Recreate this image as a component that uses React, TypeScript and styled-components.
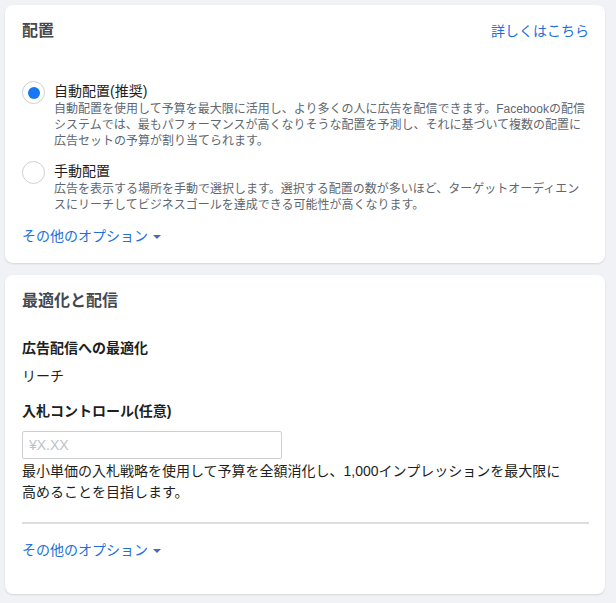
import styled, { createGlobalStyle } from 'styled-components'

const GlobalStyle = createGlobalStyle`
    html, body {
        margin: 0;
        padding: 0;
        background: #f0f2f5;
    }
    body {
        font-family: "Liberation Sans", "Noto Sans CJK JP", sans-serif;
        color: #1c1e21;
    }
`

const options = [
    {
        label: '自動配置(推奨)',
        desc: '自動配置を使用して予算を最大限に活用し、より多くの人に広告を配信できます。Facebookの配信システムでは、最もパフォーマンスが高くなりそうな配置を予測し、それに基づいて複数の配置に広告セットの予算が割り当てられます。',
        selected: true,
    },
    {
        label: '手動配置',
        desc: '広告を表示する場所を手動で選択します。選択する配置の数が多いほど、ターゲットオーディエンスにリーチしてビジネスゴールを達成できる可能性が高くなります。',
        selected: false,
    },
]

const App = () => {
    return (
        <>
            <GlobalStyle />
            <Page>
                <Card>
                    <CardHeader>
                        <Title>配置</Title>
                        <Link>詳しくはこちら</Link>
                    </CardHeader>
                    <OptionList>
                        {options.map((o) => (
                            <Option key={o.label}>
                                <Radio $selected={o.selected} />
                                <OptionText>
                                    <OptionLabel>{o.label}</OptionLabel>
                                    <OptionDesc>{o.desc}</OptionDesc>
                                </OptionText>
                            </Option>
                        ))}
                    </OptionList>
                    <MoreOptions>
                        その他のオプション
                        <Caret />
                    </MoreOptions>
                </Card>

                <Card $bottom={34}>
                    <CardHeader>
                        <Title>最適化と配信</Title>
                    </CardHeader>
                    <FieldLabel $top={27}>広告配信への最適化</FieldLabel>
                    <Value>リーチ</Value>
                    <FieldLabel $top={15}>入札コントロール(任意)</FieldLabel>
                    <Input placeholder="¥X.XX" />
                    <Help>
                        最小単価の入札戦略を使用して予算を全額消化し、1,000インプレッションを最大限に高めることを目指します。
                    </Help>
                    <Divider />
                    <MoreOptions $top={0}>
                        その他のオプション
                        <Caret />
                    </MoreOptions>
                </Card>
            </Page>
        </>
    )
}

export default App

const Page = styled.div`
    width: 600px;
    padding: 5px;
    display: flex;
    flex-direction: column;
    gap: 12px;
`

const Card = styled.div<{ $bottom?: number }>`
    background: #fff;
    border-radius: 8px;
    box-shadow: 0 1px 2px rgba(0, 0, 0, 0.12);
    padding: 16px 16px ${(p) => p.$bottom ?? 17}px 17px;
    display: flex;
    flex-direction: column;
`

const CardHeader = styled.div`
    display: flex;
    justify-content: space-between;
    align-items: center;
    height: 20px;
`

const Title = styled.h2`
    margin: 0;
    font-size: 16px;
    line-height: 20px;
    font-weight: bold;
    color: #444950;
`

const Link = styled.a`
    font-size: 14px;
    line-height: 20px;
    color: #216fdb;
    cursor: pointer;
`

const OptionList = styled.div`
    margin-top: 40px;
    display: flex;
    flex-direction: column;
    gap: 12px;
`

const Option = styled.label`
    display: flex;
    gap: 9px;
    align-items: flex-start;
`

const Radio = styled.span<{ $selected: boolean }>`
    flex: none;
    box-sizing: border-box;
    width: 23px;
    height: 23px;
    border-radius: 50%;
    border: 1px solid #ccd0d5;
    display: flex;
    align-items: center;
    justify-content: center;
    &::after {
        content: '';
        display: ${(p) => (p.$selected ? 'block' : 'none')};
        width: 12px;
        height: 12px;
        border-radius: 50%;
        background: #1877f2;
    }
`

const OptionText = styled.div`
    display: flex;
    flex-direction: column;
`

const OptionLabel = styled.div`
    font-size: 14px;
    line-height: 20px;
    color: #1c1e21;
`

const OptionDesc = styled.div`
    font-size: 12px;
    line-height: 16px;
    color: #606770;
`

const MoreOptions = styled.div<{ $top?: number }>`
    margin-top: ${(p) => p.$top ?? 13}px;
    font-size: 14px;
    line-height: 20px;
    color: #216fdb;
    display: flex;
    align-items: center;
    cursor: pointer;
`

const Caret = styled.span`
    margin-left: 5px;
    margin-top: 2px;
    width: 0;
    height: 0;
    border-left: 4px solid transparent;
    border-right: 4px solid transparent;
    border-top: 4px solid #4b6ab0;
`

const FieldLabel = styled.div<{ $top: number }>`
    margin-top: ${(p) => p.$top}px;
    font-size: 14px;
    line-height: 20px;
    font-weight: bold;
    color: #1c1e21;
`

const Value = styled.div`
    margin-top: 8px;
    font-size: 14px;
    line-height: 20px;
    color: #1c1e21;
`

const Input = styled.input`
    margin-top: 10px;
    box-sizing: border-box;
    width: 260px;
    height: 28px;
    border: 1px solid #ccd0d5;
    border-radius: 2px;
    padding: 0 6px;
    font-family: "Liberation Sans", "Noto Sans CJK JP", sans-serif;
    font-size: 14px;
    outline: none;
    &::placeholder {
        color: #bec3c9;
    }
`

const Help = styled.div`
    margin-top: 2px;
    max-width: 545px;
    font-size: 14px;
    line-height: 21px;
    color: #1c1e21;
`

const Divider = styled.hr`
    margin: 19px 0 16px;
    border: none;
    height: 2px;
    background: #dadde1;
`
